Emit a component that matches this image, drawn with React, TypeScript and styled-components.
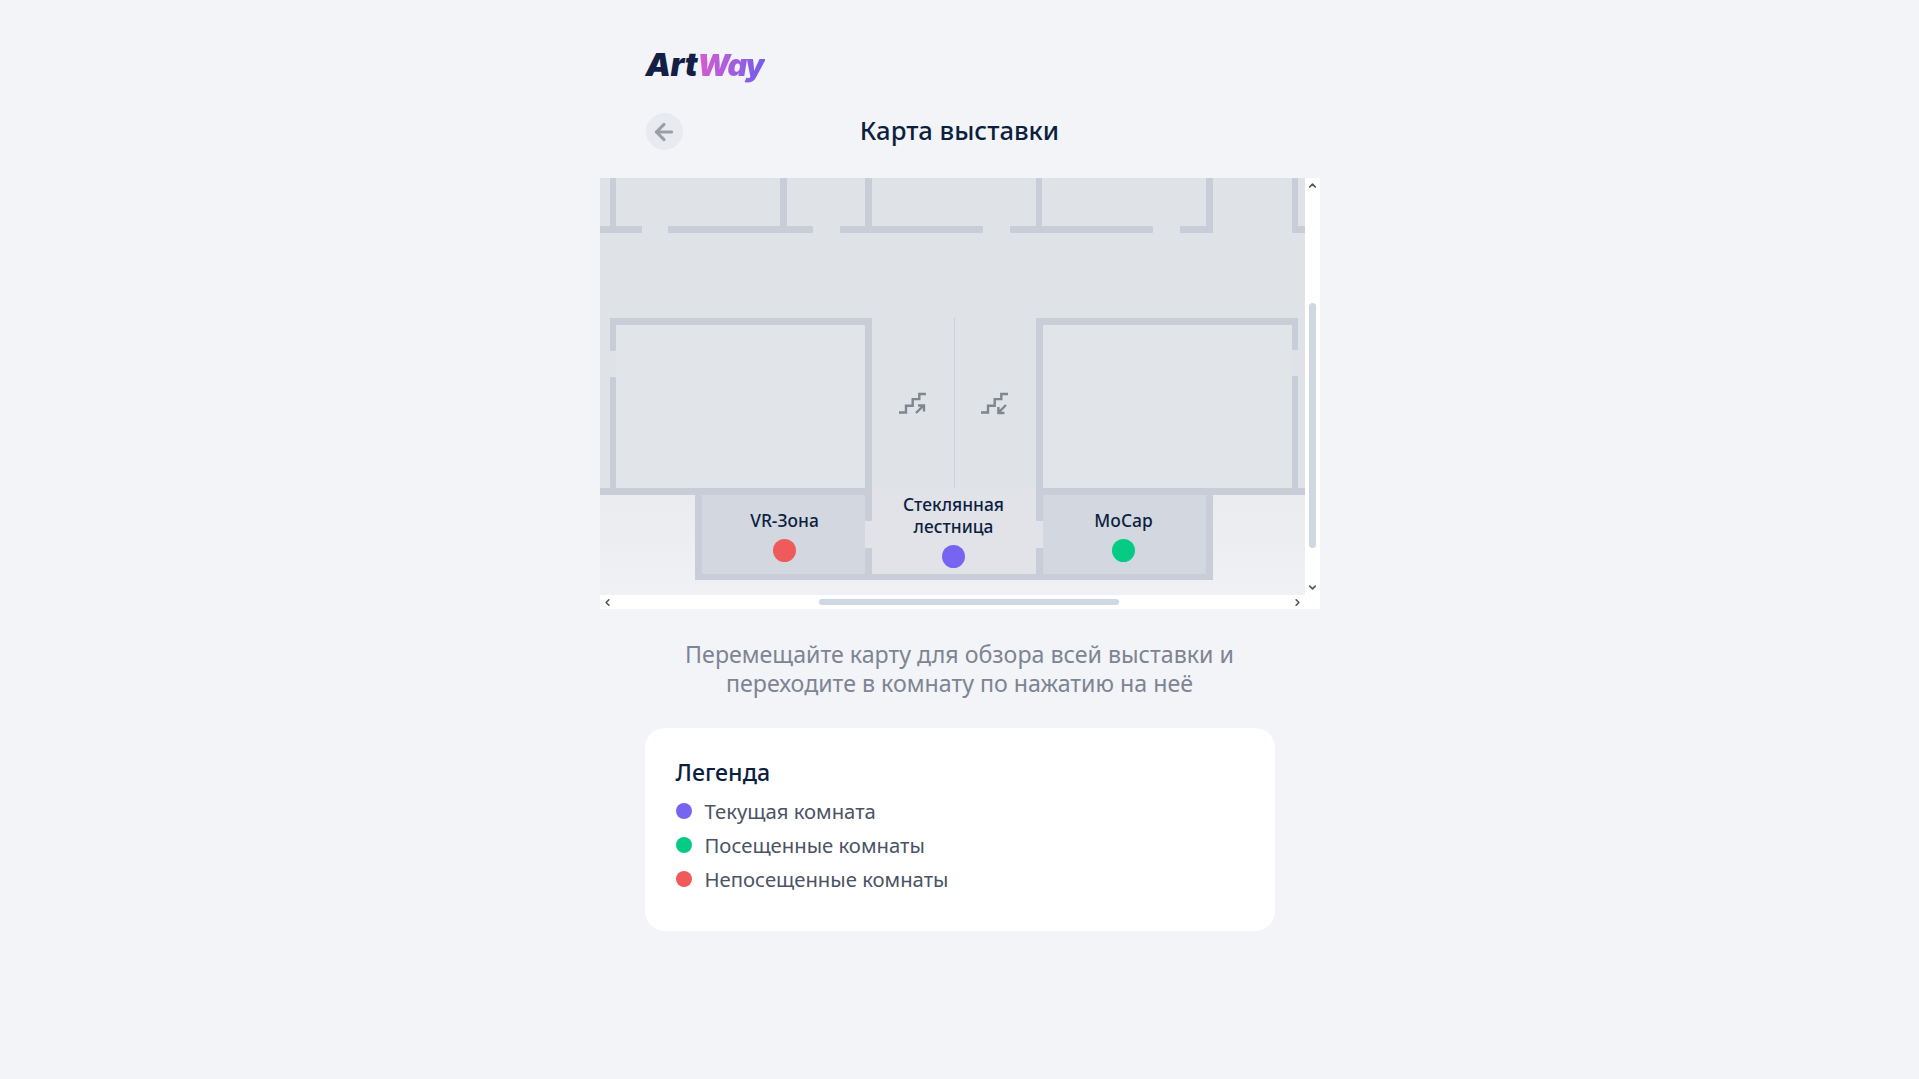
import React, { useLayoutEffect, useRef } from 'react';
import styled, { createGlobalStyle } from 'styled-components';
import { ArrowLeft, ChevronDown, ChevronLeft, ChevronRight, ChevronUp } from 'lucide-react';

const GlobalStyle = createGlobalStyle`
  html, body {
    margin: 0;
    padding: 0;
    background: #f2f4f8;
  }
  body {
    font-family: 'Noto Sans', sans-serif;
    color: #0d1f3f;
  }
`;

const ROOM = '#d3d7e0';
const WALL = '#c9cdd7';

const walls = [
  // top row of rooms
  [379, 234, 142, 7], [547, 234, 145, 7], [719, 234, 143, 7], [889, 234, 143, 7], [1059, 234, 33, 7], [1171, 234, 120, 7],
  [489, 0, 6, 241], [659, 0, 7, 241], [744, 0, 7, 241], [915, 0, 6, 241], [1085, 0, 7, 241], [1171, 0, 6, 241],
  // halls
  [489, 326, 262, 7], [915, 326, 262, 7],
  [489, 326, 6, 33], [489, 385, 6, 111],
  [744, 326, 7, 203], [744, 556, 7, 30],
  [915, 326, 7, 203], [915, 556, 7, 30],
  [1171, 326, 6, 32], [1171, 384, 6, 112],
  [379, 496, 372, 7], [915, 496, 400, 7],
  // bottom rooms
  [574, 503, 7, 85], [574, 582, 518, 6], [1085, 503, 7, 85],
];

const legend = [
  { color: '#7765f2', label: 'Текущая комната' },
  { color: '#05cb85', label: 'Посещенные комнаты' },
  { color: '#ef5a5a', label: 'Непосещенные комнаты' },
];

const Stairs = ({ x, y, down }: { x: number; y: number; down?: boolean }) => (
  <g transform={`translate(${x} ${y})`} fill="none" stroke="#80868f" strokeWidth="2.4">
    <path d="M0 19.5h7v-6.7h6.7v-6.7h6.6V1h6.7" />
    {down ? (
      <path d="M25 12l-7.6 7.6M17.4 14v6h6" />
    ) : (
      <path d="M17 20l7.4-7.4M19 12.5h6v6" />
    )}
  </g>
);

const App: React.FC = () => {
  const viewport = useRef<HTMLDivElement>(null);

  useLayoutEffect(() => {
    if (viewport.current) {
      viewport.current.scrollLeft = 479;
      viewport.current.scrollTop = 186;
    }
  }, []);

  return (
    <Page>
      <GlobalStyle />
      <Column>
        <Logo>
          Art<LogoAccent>Way</LogoAccent>
        </Logo>
        <Header>
          <BackButton aria-label="Назад">
            <ArrowLeft size={26} strokeWidth={2.8} />
          </BackButton>
          <Title>Карта выставки</Title>
        </Header>
        <MapFrame>
          <MapViewport ref={viewport}>
            <MapCanvas>
              <PlanSvg width="1586" height="656" viewBox="0 0 1586 656">
                <defs>
                  <linearGradient id="floor" x1="0" y1="0" x2="0" y2="1">
                    <stop offset="0" stopColor="#e9ebef" />
                    <stop offset="1" stopColor="#eff1f4" />
                  </linearGradient>
                </defs>
                <rect width="1586" height="656" fill="#dfe2e6" />
                <rect y="500" width="1586" height="104" fill="url(#floor)" />
                <rect x="495" y="333" width="249" height="163" fill="#e1e4e8" />
                <rect x="921" y="333" width="250" height="163" fill="#e1e4e8" />
                <rect x="581" y="503" width="163" height="79" fill={ROOM} />
                <rect x="922" y="503" width="163" height="79" fill={ROOM} />
                <rect x="744" y="496" width="178" height="86" fill="#e1e3e8" />
                <rect x="833" y="326" width="1" height="170" fill="#cdd1d9" />
                {walls.map(([x, y, w, h]) => (
                  <rect key={`${x}-${y}-${w}`} x={x} y={y} width={w} height={h} rx="1" fill={WALL} />
                ))}
                <Stairs x={778} y={401} />
                <Stairs x={860} y={401} down />
              </PlanSvg>
              <Pin $x={664} $y={517}>
                <PinLabel>VR-Зона</PinLabel>
                <Dot $color="#ef5a5a" />
              </Pin>
              <Pin $x={833} $y={501}>
                <PinLabel>Стеклянная лестница</PinLabel>
                <Dot $color="#7765f2" />
              </Pin>
              <Pin $x={1003} $y={517}>
                <PinLabel>MoCap</PinLabel>
                <Dot $color="#05cb85" />
              </Pin>
            </MapCanvas>
          </MapViewport>
          <VerticalBar>
            <BarArrow><ChevronUp size={11} strokeWidth={3.5} /></BarArrow>
            <BarTrack><VerticalThumb /></BarTrack>
            <BarArrow><ChevronDown size={11} strokeWidth={3.5} /></BarArrow>
          </VerticalBar>
          <HorizontalBar>
            <BarArrow><ChevronLeft size={11} strokeWidth={3.5} /></BarArrow>
            <BarTrack><HorizontalThumb /></BarTrack>
            <BarArrow><ChevronRight size={11} strokeWidth={3.5} /></BarArrow>
          </HorizontalBar>
          <BarCorner />
        </MapFrame>
        <Hint>
          Перемещайте карту для обзора всей выставки и
          <br />
          переходите в комнату по нажатию на неё
        </Hint>
        <LegendCard>
          <LegendTitle>Легенда</LegendTitle>
          <LegendList>
            {legend.map((item) => (
              <LegendRow key={item.label}>
                <LegendDot $color={item.color} />
                {item.label}
              </LegendRow>
            ))}
          </LegendList>
        </LegendCard>
      </Column>
    </Page>
  );
};

export default App;

const Page = styled.div`
  min-height: 1079px;
  display: flex;
  justify-content: center;
`;

const Column = styled.main`
  width: 720px;
  display: flex;
  flex-direction: column;
`;

const Logo = styled.div`
  height: 40px;
  margin: 45px 0 0 46px;
  font-family: 'Inter', sans-serif;
  font-size: 32px;
  line-height: 40px;
  font-weight: 900;
  font-style: italic;
  letter-spacing: -0.4px;
  color: #131f45;
`;

const LogoAccent = styled.span`
  background: linear-gradient(100deg, #dd5ccf 0%, #6f5eea 100%);
  -webkit-background-clip: text;
  background-clip: text;
  color: transparent;
  font-size: 30.5px;
  letter-spacing: -1.3px;
  padding-right: 2px;
`;

const Header = styled.header`
  position: relative;
  height: 37px;
  margin-top: 28px;
  display: flex;
  align-items: center;
  justify-content: center;
`;

const BackButton = styled.button`
  position: absolute;
  left: 46px;
  top: 0;
  width: 37px;
  height: 37px;
  padding: 0;
  border: 0;
  border-radius: 50%;
  background: #e8eaef;
  color: #9a9ea9;
  display: flex;
  align-items: center;
  justify-content: center;
`;

const Title = styled.h1`
  margin: 0 0 1px;
  font-size: 25.6px;
  line-height: 36px;
  font-weight: 500;
  color: #0d1f3f;
`;

const MapFrame = styled.div`
  margin-top: 28px;
  display: grid;
  grid-template-columns: 705px 15px;
  grid-template-rows: 417px 14px;
  background: #fff;
`;

const MapViewport = styled.div`
  overflow: hidden;
`;

const MapCanvas = styled.div`
  position: relative;
  width: 1586px;
  height: 656px;
`;

const PlanSvg = styled.svg`
  display: block;
`;

const Pin = styled.div<{ $x: number; $y: number }>`
  position: absolute;
  left: ${(p) => p.$x}px;
  top: ${(p) => p.$y}px;
  width: 130px;
  transform: translateX(-50%);
  display: flex;
  flex-direction: column;
  align-items: center;
  gap: 8px;
`;

const PinLabel = styled.span`
  font-size: 17.4px;
  line-height: 22px;
  font-weight: 500;
  text-align: center;
  color: #0d1f3f;
`;

const Dot = styled.span<{ $color: string }>`
  width: 23px;
  height: 23px;
  border-radius: 50%;
  background: ${(p) => p.$color};
`;

const VerticalBar = styled.div`
  display: flex;
  flex-direction: column;
`;

const HorizontalBar = styled.div`
  display: flex;
`;

const BarCorner = styled.div`
  background: #fff;
`;

const BarArrow = styled.span`
  flex: 0 0 15px;
  height: 15px;
  display: flex;
  align-items: center;
  justify-content: center;
  color: #555;

  ${HorizontalBar} & {
    height: 14px;
  }
`;

const BarTrack = styled.div`
  flex: 1;
`;

const VerticalThumb = styled.div`
  width: 7px;
  height: 245px;
  margin: 110px 0 0 4px;
  border-radius: 4px;
  background: #cfd8e2;
`;

const HorizontalThumb = styled.div`
  width: 300px;
  height: 6px;
  margin: 4px 0 0 204px;
  border-radius: 3px;
  background: #cfd8e2;
`;

const Hint = styled.p`
  margin: 31px 0 0;
  font-size: 23.2px;
  line-height: 29px;
  text-align: center;
  color: #7d8494;
`;

const LegendCard = styled.section`
  width: 630px;
  height: 203px;
  box-sizing: border-box;
  margin: 30px 0 0 45px;
  padding: 29px 30px 0 31px;
  border-radius: 20px;
  background: #fff;
`;

const LegendTitle = styled.h2`
  margin: 0;
  font-size: 23.2px;
  line-height: 30px;
  font-weight: 500;
  color: #0d1f3f;
`;

const LegendList = styled.ul`
  margin: 10px 0 0;
  padding: 0;
  list-style: none;
  display: flex;
  flex-direction: column;
  gap: 6px;
`;

const LegendRow = styled.li`
  display: flex;
  align-items: center;
  gap: 13px;
  font-size: 20.3px;
  line-height: 28px;
  color: #4b5365;
`;

const LegendDot = styled.span<{ $color: string }>`
  width: 16px;
  height: 16px;
  border-radius: 50%;
  background: ${(p) => p.$color};
`;
